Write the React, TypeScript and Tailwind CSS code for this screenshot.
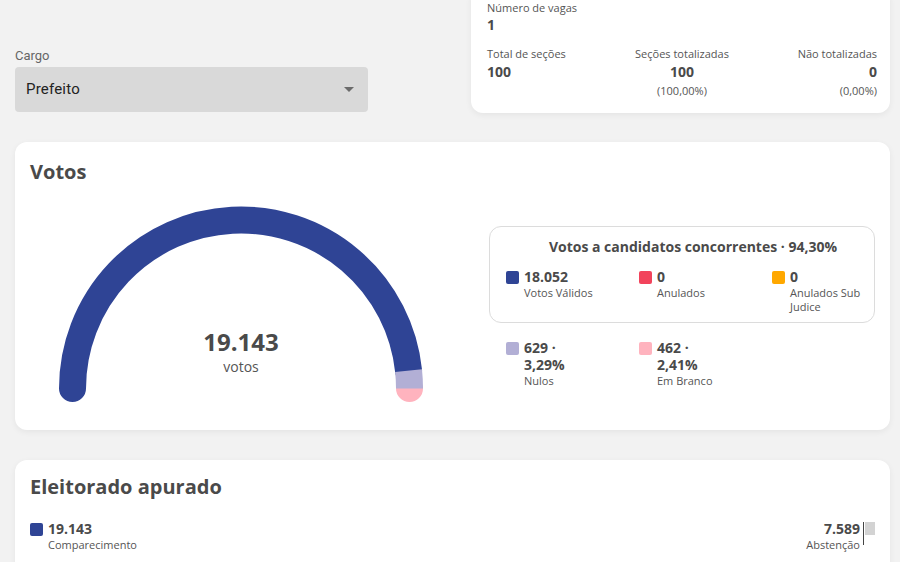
import React from "react";

const F = { fontFamily: '"Open Sans", "Noto Sans", sans-serif' };
const R = { fontFamily: 'Roboto, "Liberation Sans", sans-serif' };

function Item({ color, value, label }: { color: string; value: React.ReactNode[]; label: React.ReactNode[] }) {
  return (
    <div className="flex items-start gap-[5px]">
      <div className="w-[13px] h-[13px] rounded-[2px] mt-[2px] shrink-0" style={{ background: color }} />
      <div className="flex flex-col whitespace-nowrap">
        {value.map((v, i) => (
          <div key={i} className="text-[14px] leading-[16px] font-bold text-[#4a4a4a] mb-[1px]">{v}</div>
        ))}
        {label.map((l, i) => (
          <div key={i} className="text-[11px] leading-[14px] text-[#555]">{l}</div>
        ))}
      </div>
    </div>
  );
}

function Gauge() {
  const cx = 211;
  const cy = 187.5;
  const r = 168.5;
  const pt = (deg: number) => {
    const a = (deg * Math.PI) / 180;
    return [cx + r * Math.cos(a), cy - r * Math.sin(a)];
  };
  const [x0, y0] = pt(180);
  const [x1, y1] = pt(6.1);
  const [x2, y2] = pt(0);
  return (
    <div className="relative w-[422px] h-[202px]">
      <svg width="422" height="202" viewBox="0 0 422 202">
        <path d={`M ${x0} ${y0} A ${r} ${r} 0 0 1 ${x1} ${y1}`} fill="none" stroke="#2f4495" strokeWidth="27" strokeLinecap="round" />
        <circle cx={x2} cy={y2} r="13.5" fill="#ffb3be" />
        <path d={`M ${x1} ${y1} A ${r} ${r} 0 0 1 ${x2} ${y2}`} fill="none" stroke="#b2afd5" strokeWidth="27" strokeLinecap="butt" />
      </svg>
      <div className="absolute left-0 right-0 top-[126px] flex flex-col items-center">
        <div className="text-[24px] leading-[30px] font-bold text-[#4a4a4a]">19.143</div>
        <div className="text-[14px] leading-[20px] text-[#555]">votos</div>
      </div>
    </div>
  );
}

export default function App() {
  return (
    <div className="w-[900px] h-[562px] overflow-hidden bg-[#f2f2f2] pl-[15px] pr-[10px]" style={F}>
      {/* Top row */}
      <div className="flex items-end justify-between -mt-[12px]">
        <div className="w-[353px] flex flex-col" style={R}>
          <div className="text-[13px] leading-[18px] text-[#666] mb-[2px]">Cargo</div>
          <div className="h-[45px] bg-[#d9d9d9] rounded-[4px] flex items-center justify-between pl-[11px] pr-[14px]">
            <span className="text-[15px] text-[#222] tracking-[0.2px]">Prefeito</span>
            <svg width="10" height="5" viewBox="0 0 10 5"><path d="M0 0 L10 0 L5 5 Z" fill="#6b6b6b" /></svg>
          </div>
        </div>
        <div className="w-[419px] bg-white rounded-[12px] shadow-[0_2px_6px_rgba(0,0,0,0.06)] pt-[12px] pb-[14px] pl-[16px] pr-[13px] -mb-[1px]">
          <div className="text-[11px] leading-[15px] text-[#555]">Número de vagas</div>
          <div className="text-[14px] leading-[19px] font-bold text-[#4a4a4a]">1</div>
          <div className="grid grid-cols-3 mt-[12px]">
            <div className="flex flex-col">
              <div className="text-[11px] leading-[15px] text-[#555]">Total de seções</div>
              <div className="text-[14px] leading-[21px] font-bold text-[#4a4a4a]">100</div>
            </div>
            <div className="flex flex-col items-center">
              <div className="text-[11px] leading-[15px] text-[#555]">Seções totalizadas</div>
              <div className="text-[14px] leading-[21px] font-bold text-[#4a4a4a]">100</div>
              <div className="text-[11px] leading-[17px] text-[#555]">(100,00%)</div>
            </div>
            <div className="flex flex-col items-end">
              <div className="text-[11px] leading-[15px] text-[#555]">Não totalizadas</div>
              <div className="text-[14px] leading-[21px] font-bold text-[#4a4a4a]">0</div>
              <div className="text-[11px] leading-[17px] text-[#555]">(0,00%)</div>
            </div>
          </div>
        </div>
      </div>

      {/* Votos card */}
      <div className="mt-[30px] w-[875px] h-[288px] bg-white rounded-[12px] shadow-[0_2px_6px_rgba(0,0,0,0.06)] pt-[16px] px-[15px]">
        <div className="text-[20px] leading-[28px] font-bold text-[#4a4a4a]">Votos</div>
        <div className="flex mt-[15px]">
          <Gauge />
          <div className="ml-[37px] w-[386px] mt-[25px]">
            <div className="border border-[#dcdcdc] rounded-[12px] pt-[10px] pb-[8px] px-[16px]">
              <div className="text-center text-[14px] leading-[20px] font-bold text-[#4a4a4a] pl-[22px]">
                Votos a candidatos concorrentes · 94,30%
              </div>
              <div className="grid grid-cols-[95px_95px_87px] gap-x-[38px] mt-[12px]">
                <Item color="#2f4495" value={["18.052"]} label={["Votos Válidos"]} />
                <Item color="#f2435b" value={["0"]} label={["Anulados"]} />
                <Item color="#ffa800" value={["0"]} label={["Anulados Sub", "Judice"]} />
              </div>
            </div>
            <div className="grid grid-cols-[95px_95px_87px] gap-x-[38px] mt-[17px] pl-[17px]">
              <Item color="#b2afd5" value={["629 ·", "3,29%"]} label={["Nulos"]} />
              <Item color="#ffb3be" value={["462 ·", "2,41%"]} label={["Em Branco"]} />
            </div>
          </div>
        </div>
      </div>

      {/* Eleitorado card */}
      <div className="mt-[30px] w-[875px] h-[200px] bg-white rounded-[12px] shadow-[0_2px_6px_rgba(0,0,0,0.06)] pt-[13px] px-[15px]">
        <div className="text-[20px] leading-[28px] font-bold text-[#4a4a4a]">Eleitorado apurado</div>
        <div className="flex justify-between mt-[20px]">
          <Item color="#2f4495" value={["19.143"]} label={["Comparecimento"]} />
          <div className="flex items-start">
            <div className="flex flex-col items-end">
              <div className="text-[14px] leading-[16px] font-bold text-[#4a4a4a] mb-[1px]">7.589</div>
              <div className="text-[11px] leading-[14px] text-[#555]">Abstenção</div>
            </div>
            <div className="w-[1px] h-[23px] bg-[#444] ml-[3px] mt-[1px]" />
            <div className="w-[10px] h-[13px] bg-[#d3d3d3] ml-[1px] mt-[1px]" />
          </div>
        </div>
      </div>
    </div>
  );
}
